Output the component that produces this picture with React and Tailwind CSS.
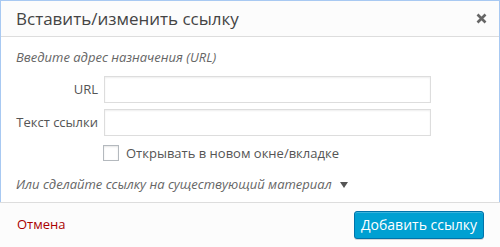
export default function App() {
  return (
    <div className="w-[500px] h-[247px] bg-white flex flex-col overflow-hidden" style={{ fontFamily: '"Open Sans", "Liberation Sans", sans-serif' }}>
      <div className="flex flex-col border border-b-0 border-[#a8c9f2] h-[202px]">
        {/* header */}
        <div className="h-[36px] shrink-0 bg-[#fcfcfc] border-b border-[#dddddd] flex items-center justify-between pl-[15px] pr-[12px]">
          <span className="text-[17px] leading-[36px] text-[#444444]">Вставить/изменить ссылку</span>
          <svg width="11" height="11" viewBox="0 0 11 11">
            <path d="M1.5 1.5 L9.5 9.5 M9.5 1.5 L1.5 9.5" stroke="#666" strokeWidth="2.6" strokeLinecap="butt" />
          </svg>
        </div>

        {/* body */}
        <div className="flex-1 flex flex-col pl-[15px] text-[13px] text-[#555]">
          <div className="italic text-[#666] leading-[18px] mt-[11px]">Введите адрес назначения (URL)</div>

          <div className="flex items-center mt-[10px]">
            <label className="w-[82px] text-right">URL</label>
            <input className="ml-[6px] w-[327px] h-[27px] border border-[#dddddd] shadow-[inset_0_1px_2px_rgba(0,0,0,0.07)] outline-none" />
          </div>
          <div className="flex items-center mt-[6px]">
            <label className="w-[82px] text-right">Текст ссылки</label>
            <input className="ml-[6px] w-[327px] h-[27px] border border-[#dddddd] shadow-[inset_0_1px_2px_rgba(0,0,0,0.07)] outline-none" />
          </div>
          <div className="flex items-center mt-[8px] pl-[87px]">
            <span className="w-[16px] h-[16px] border border-[#b4b9be] bg-white shadow-[inset_0_1px_2px_rgba(0,0,0,0.1)]" />
            <span className="ml-[7px] leading-[18px]">Открывать в новом окне/вкладке</span>
          </div>

          <div className="flex items-center mt-[13px] italic text-[#666]">
            <span>Или сделайте ссылку на существующий материал</span>
            <svg className="ml-[8px]" width="8" height="6" viewBox="0 0 8 6">
              <path d="M0 0 L8 0 L4 6 Z" fill="#555" />
            </svg>
          </div>
        </div>
      </div>

      {/* footer */}
      <div className="flex-1 bg-[#fcfcfc] border-t border-[#dddddd] flex items-center justify-between pl-[17px] pr-[16px]">
        <span className="text-[13px] text-[#a00]">Отмена</span>
        <button className="h-[28px] w-[130px] rounded-[3px] bg-[#00a0d2] border border-[#0073aa] shadow-[inset_0_1px_0_rgba(120,200,230,0.5),0_1px_0_rgba(0,0,0,0.15)] text-white text-[14px] leading-[26px]">
          Добавить ссылку
        </button>
      </div>
    </div>
  );
}
